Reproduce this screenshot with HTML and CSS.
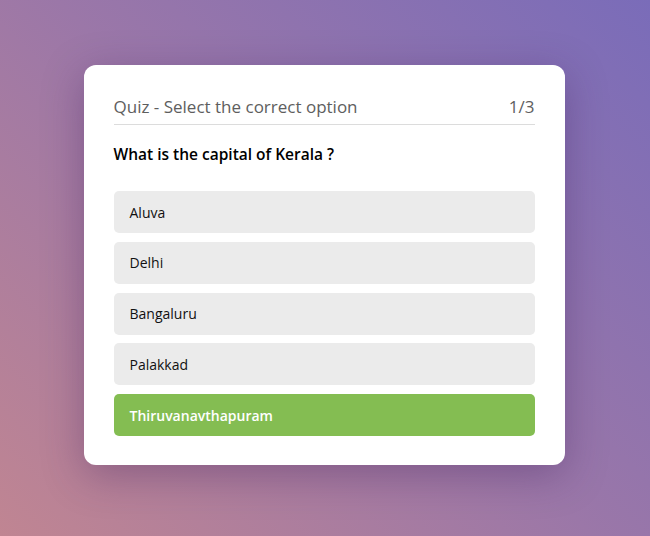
FILE: index.html
```html
<!DOCTYPE html>
<html>
<head>
<meta charset="utf-8">
<link rel="stylesheet" href="styles.css">
</head>
<body>
<div class="card">
  <div class="header">
    <span class="title">Quiz - Select the correct option</span>
    <span class="count">1/3</span>
  </div>
  <p class="question">What is the capital of Kerala ?</p>
  <ul class="options">
    <li class="option">Aluva</li>
    <li class="option">Delhi</li>
    <li class="option">Bangaluru</li>
    <li class="option">Palakkad</li>
    <li class="option correct">Thiruvanavthapuram</li>
  </ul>
</div>
</body>
</html>
```
FILE: styles.css
```css
* { box-sizing: border-box; }
html, body { margin: 0; height: 100%; }
body {
  font-family: "Open Sans", "Liberation Sans", sans-serif;
  background: linear-gradient(45deg, #c08592 0%, #9b77a8 50%, #7a6cb9 100%);
  display: flex;
  align-items: center;
  justify-content: center;
  padding: 0 2px 6px 0;
}
.card {
  width: 481px;
  height: 400px;
  background: #fff;
  border-radius: 12px;
  padding: 30px 30px 29px;
  box-shadow: 0 10px 40px rgba(60, 30, 90, 0.35);
}
.header {
  display: flex;
  justify-content: space-between;
  align-items: flex-start;
  color: #5e5e5e;
  font-size: 17px;
  font-weight: 500;
  line-height: 24px;
  height: 30px;
  border-bottom: 1px solid #dcdcdc;
}
.question {
  margin: 17px 0 0;
  font-size: 15.5px;
  font-weight: 600;
  color: #000;
  line-height: 24px;
}
.options {
  list-style: none;
  margin: 0;
  padding: 0;
  margin-top: 25px;
  display: flex;
  flex-direction: column;
  gap: 8.75px;
}
.option {
  height: 42px;
  display: flex;
  align-items: center;
  padding-left: 16px;
  background: #ebebeb;
  border-radius: 5px;
  font-size: 14px;
  color: #111;
}
.option.correct {
  background: #84bd52;
  color: #fff;
  font-weight: 600;
}
```
